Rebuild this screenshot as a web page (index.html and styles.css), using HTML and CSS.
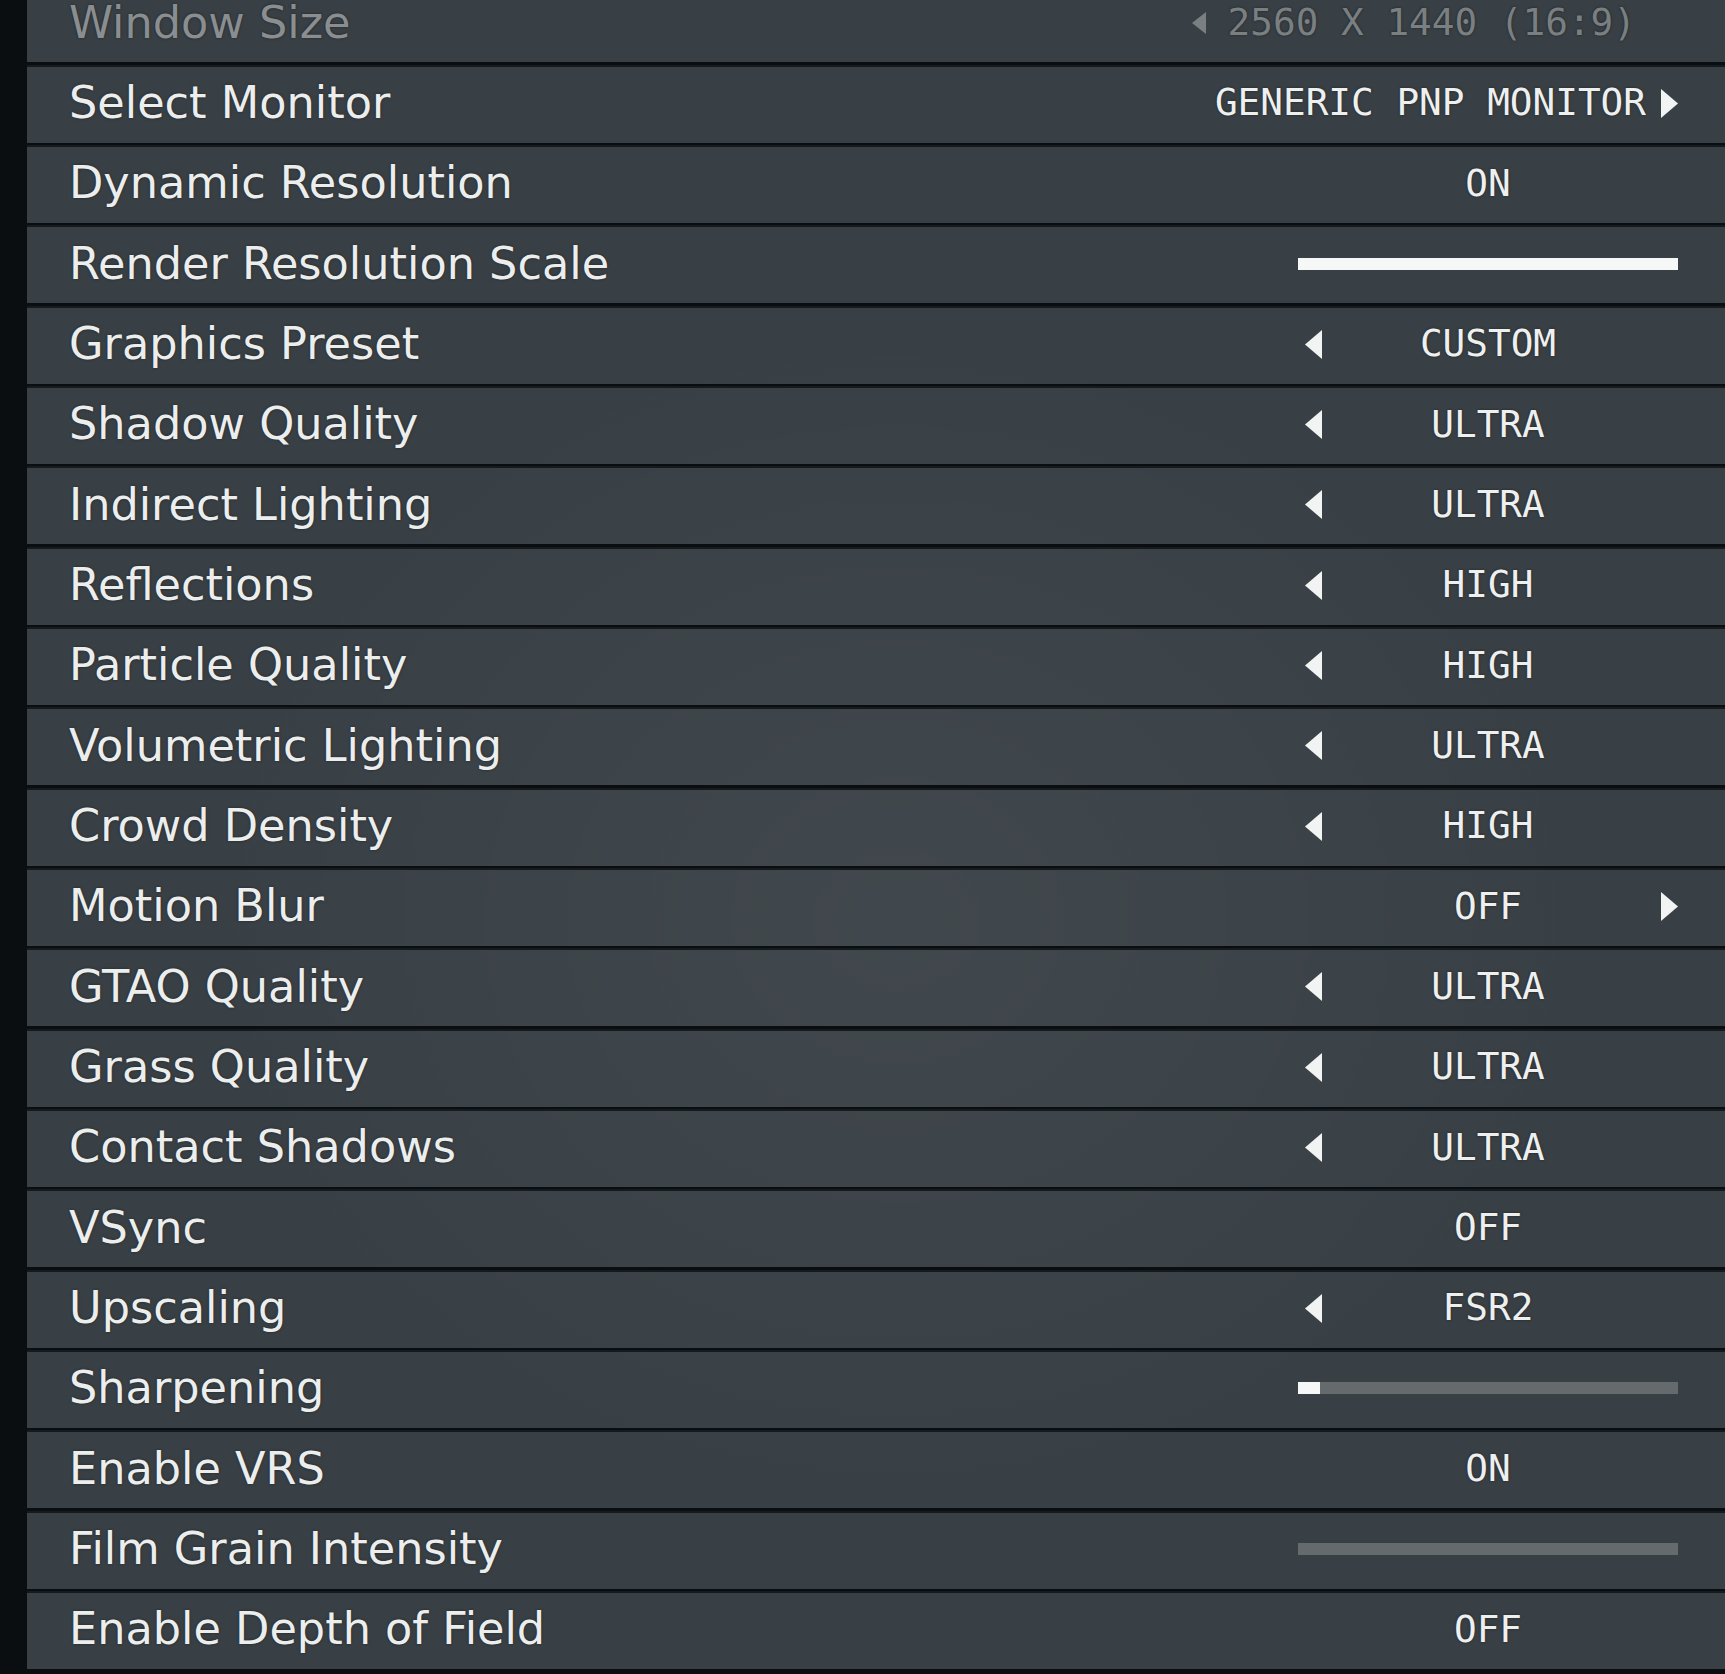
FILE: index.html
```html
<!DOCTYPE html>
<html lang="en">
<head>
<meta charset="utf-8">
<title>Display Settings</title>
<link rel="stylesheet" href="styles.css">
</head>
<body>
<div class="list">
  <div class="row dim">
    <span class="label">Window Size</span>
    <div class="ctrl wide">
      <svg class="arrow small" viewBox="0 0 14 22"><path d="M0 11 L14 0 V22 Z"/></svg>
      <span class="val">2560 X 1440 (16:9)</span>
    </div>
  </div>
  <div class="row">
    <span class="label">Select Monitor</span>
    <div class="ctrl wide monitor">
      <span class="val">GENERIC PNP MONITOR</span>
      <svg class="arrow" viewBox="0 0 17 29"><path d="M17 14.5 L0 0 V29 Z"/></svg>
    </div>
  </div>
  <div class="row">
    <span class="label">Dynamic Resolution</span>
    <div class="ctrl"><span class="val">ON</span></div>
  </div>
  <div class="row">
    <span class="label">Render Resolution Scale</span>
    <div class="ctrl"><div class="slider full"></div></div>
  </div>
  <div class="row">
    <span class="label">Graphics Preset</span>
    <div class="ctrl"><svg class="arrow left" viewBox="0 0 17 29"><path d="M0 14.5 L17 0 V29 Z"/></svg><span class="val">CUSTOM</span></div>
  </div>
  <div class="row">
    <span class="label">Shadow Quality</span>
    <div class="ctrl"><svg class="arrow left" viewBox="0 0 17 29"><path d="M0 14.5 L17 0 V29 Z"/></svg><span class="val">ULTRA</span></div>
  </div>
  <div class="row">
    <span class="label">Indirect Lighting</span>
    <div class="ctrl"><svg class="arrow left" viewBox="0 0 17 29"><path d="M0 14.5 L17 0 V29 Z"/></svg><span class="val">ULTRA</span></div>
  </div>
  <div class="row">
    <span class="label">Reflections</span>
    <div class="ctrl"><svg class="arrow left" viewBox="0 0 17 29"><path d="M0 14.5 L17 0 V29 Z"/></svg><span class="val">HIGH</span></div>
  </div>
  <div class="row">
    <span class="label">Particle Quality</span>
    <div class="ctrl"><svg class="arrow left" viewBox="0 0 17 29"><path d="M0 14.5 L17 0 V29 Z"/></svg><span class="val">HIGH</span></div>
  </div>
  <div class="row">
    <span class="label">Volumetric Lighting</span>
    <div class="ctrl"><svg class="arrow left" viewBox="0 0 17 29"><path d="M0 14.5 L17 0 V29 Z"/></svg><span class="val">ULTRA</span></div>
  </div>
  <div class="row">
    <span class="label">Crowd Density</span>
    <div class="ctrl"><svg class="arrow left" viewBox="0 0 17 29"><path d="M0 14.5 L17 0 V29 Z"/></svg><span class="val">HIGH</span></div>
  </div>
  <div class="row">
    <span class="label">Motion Blur</span>
    <div class="ctrl"><span class="val">OFF</span><svg class="arrow right" viewBox="0 0 17 29"><path d="M17 14.5 L0 0 V29 Z"/></svg></div>
  </div>
  <div class="row">
    <span class="label">GTAO Quality</span>
    <div class="ctrl"><svg class="arrow left" viewBox="0 0 17 29"><path d="M0 14.5 L17 0 V29 Z"/></svg><span class="val">ULTRA</span></div>
  </div>
  <div class="row">
    <span class="label">Grass Quality</span>
    <div class="ctrl"><svg class="arrow left" viewBox="0 0 17 29"><path d="M0 14.5 L17 0 V29 Z"/></svg><span class="val">ULTRA</span></div>
  </div>
  <div class="row">
    <span class="label">Contact Shadows</span>
    <div class="ctrl"><svg class="arrow left" viewBox="0 0 17 29"><path d="M0 14.5 L17 0 V29 Z"/></svg><span class="val">ULTRA</span></div>
  </div>
  <div class="row">
    <span class="label">VSync</span>
    <div class="ctrl"><span class="val">OFF</span></div>
  </div>
  <div class="row">
    <span class="label">Upscaling</span>
    <div class="ctrl"><svg class="arrow left" viewBox="0 0 17 29"><path d="M0 14.5 L17 0 V29 Z"/></svg><span class="val">FSR2</span></div>
  </div>
  <div class="row">
    <span class="label">Sharpening</span>
    <div class="ctrl"><div class="slider track"><div class="thumb"></div></div></div>
  </div>
  <div class="row">
    <span class="label">Enable VRS</span>
    <div class="ctrl"><span class="val">ON</span></div>
  </div>
  <div class="row">
    <span class="label">Film Grain Intensity</span>
    <div class="ctrl"><div class="slider track"></div></div>
  </div>
  <div class="row">
    <span class="label">Enable Depth of Field</span>
    <div class="ctrl"><span class="val">OFF</span></div>
  </div>
</div>
</body>
</html>
```

FILE: styles.css
```css
html, body {
  margin: 0;
  padding: 0;
}

body {
  width: 1725px;
  height: 1674px;
  overflow: hidden;
  background: #0a0e11;
}

.list {
  display: flex;
  flex-direction: column;
  gap: 4.33px;
  margin-top: -13.6px;
  padding-left: 27px;
  background: #0a0e11;
}

.row {
  height: 76px;
  box-sizing: border-box;
  padding-bottom: 3px;
  display: flex;
  align-items: center;
  background-color: #394045;
  background-image: radial-gradient(ellipse 700px 600px at 52% 55%, rgba(255, 255, 255, 0.045), rgba(255, 255, 255, 0) 100%);
  background-attachment: fixed;
  box-shadow: 0 -2px 0 #151a1e;
}

.label {
  flex: 1;
  padding-left: 42px;
  font-family: "DejaVu Sans", sans-serif;
  font-size: 44.6px;
  line-height: 1;
  color: #eceeee;
  white-space: nowrap;
  text-shadow: 0 0 3px rgba(0, 0, 0, 0.45);
}

.ctrl {
  width: 380px;
  margin-right: 47px;
  display: grid;
  align-items: center;
}

.ctrl > * {
  grid-area: 1 / 1;
}

.val {
  justify-self: center;
  font-family: "DejaVu Sans Mono", monospace;
  font-size: 37.7px;
  line-height: 1;
  color: #eef0f0;
  white-space: nowrap;
  text-shadow: 0 0 3px rgba(0, 0, 0, 0.45);
}

.arrow {
  width: 17px;
  height: 29px;
  fill: #f2f3f3;
}

.arrow.left {
  justify-self: start;
  margin-left: 7px;
}

.arrow.right {
  justify-self: end;
}

.ctrl.wide {
  width: auto;
  display: flex;
  align-items: center;
}

.ctrl.monitor {
  gap: 15px;
}

.dim .label {
  color: #8a8e91;
}

.dim .ctrl {
  gap: 22px;
  margin-right: 89px;
}

.dim .val {
  color: #7a7f82;
}

.arrow.small {
  width: 14px;
  height: 22px;
  fill: #7a7f82;
}

.slider {
  width: 380px;
  height: 12px;
}

.slider.full {
  background: #f6f7f7;
}

.slider.track {
  background: #656b6c;
}

.thumb {
  width: 22px;
  height: 12px;
  background: #f6f7f7;
}
```
